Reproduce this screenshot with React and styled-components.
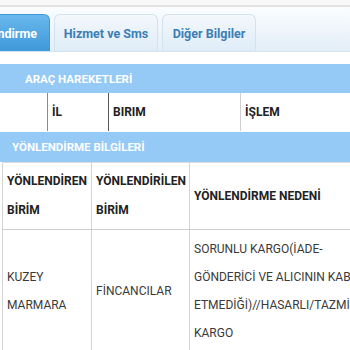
import React from 'react';
import styled, { createGlobalStyle } from 'styled-components';

const GlobalStyle = createGlobalStyle`
  html, body {
    margin: 0;
    padding: 0;
    background: #ffffff;
    overflow: hidden;
  }
  body {
    width: 350px;
    height: 350px;
    font-family: Roboto, "Noto Sans", "Liberation Sans", sans-serif;
  }
`;

const Page = styled.div`
  width: 350px;
  height: 350px;
  overflow: hidden;
  display: flex;
  flex-direction: column;
`;

const TopStrip = styled.div`
  height: 5px;
  background: #f7f7f7;
  border-bottom: 2px solid #e2e2e2;
  flex-shrink: 0;
`;

const TabBar = styled.div`
  height: 44px;
  flex-shrink: 0;
  display: flex;
  align-items: flex-end;
  background: linear-gradient(#fbfdff, #e3eef8);
  border-bottom: 1px solid #d3e2ef;
  overflow: hidden;
`;

const TabTrack = styled.div`
  display: flex;
  align-items: flex-end;
  gap: 4px;
  margin-left: ${({ offset }) => offset}px;
`;

const Tab = styled.div`
  height: 37px;
  padding: 0 12px;
  display: flex;
  align-items: center;
  white-space: nowrap;
  font-size: 12.5px;
  font-weight: 700;
  border-radius: 6px 6px 0 0;
  box-sizing: border-box;
  color: ${({ active }) => (active ? '#ffffff' : '#3b7eb5')};
  background: ${({ active }) =>
    active
      ? 'linear-gradient(#6ab8ee, #3f98d8)'
      : 'linear-gradient(#f3f8fc, #dfecf7)'};
  border: 1px solid ${({ active }) => (active ? '#3f98d8' : '#d2e2ef')};
  border-bottom: none;
  width: ${({ w }) => (w ? `${w}px` : 'auto')};
  justify-content: ${({ active }) => (active ? 'flex-start' : 'center')};
`;

const Section = styled.div`
  margin-top: ${({ top }) => top}px;
  width: 460px;
  flex-shrink: 0;
`;

const SectionHeader = styled.div`
  height: ${({ h }) => h}px;
  background: #95c9f6;
  color: #ffffff;
  font-size: 11.5px;
  font-weight: 700;
  display: flex;
  align-items: center;
  padding-left: ${({ pad }) => pad}px;
`;

const Row = styled.div`
  display: grid;
  grid-template-columns: ${({ cols }) => cols};
  margin-left: ${({ inset }) => inset || 0}px;
  border-top: ${({ topLine }) => (topLine ? '1px solid #dcdcdc' : 'none')};
  border-bottom: ${({ bottomLine }) => (bottomLine ? '1px solid #cfcfcf' : 'none')};
  min-height: ${({ h }) => h}px;
`;

const Cell = styled.div`
  border-left: 1px solid ${({ line }) => line || '#d4d4d4'};
  padding: 0 4px;
  display: flex;
  align-items: center;
  font-size: 12px;
  font-weight: ${({ bold }) => (bold ? 700 : 400)};
  color: ${({ bold }) => (bold ? '#222' : '#3a3a3a')};
  line-height: ${({ lh }) => lh || 28}px;
  box-sizing: border-box;
`;

const EmptyCell = styled.div``;

function App() {
  return (
    <Page>
      <GlobalStyle />
      <TopStrip />
      <TabBar>
        <TabTrack offset={-47}>
          <Tab active>Yönlendirme</Tab>
          <Tab w={104}>Hizmet ve Sms</Tab>
          <Tab w={94}>Diğer Bilgiler</Tab>
        </TabTrack>
      </TabBar>

      <Section top={12}>
        <SectionHeader h={29} pad={25}>ARAÇ HAREKETLERİ</SectionHeader>
        <Row cols="47px 61px 132px 1fr" h={38}>
          <EmptyCell />
          <Cell bold line="#8a8a8a">İL</Cell>
          <Cell bold line="#5a5a5a">BIRIM</Cell>
          <Cell bold line="#cfcfcf">İŞLEM</Cell>
        </Row>
      </Section>

      <Section top={1}>
        <SectionHeader h={30} pad={12}>YÖNLENDİRME BİLGİLERİ</SectionHeader>
        <Row cols="89px 98px 1fr" h={66} inset={2} topLine bottomLine>
          <Cell bold lh={29}>YÖNLENDİREN BİRİM</Cell>
          <Cell bold lh={29}>YÖNLENDİRİLEN BİRİM</Cell>
          <Cell bold>YÖNLENDİRME NEDENİ</Cell>
        </Row>
        <Row cols="89px 98px 172px" h={122} inset={2}>
          <Cell>KUZEY MARMARA</Cell>
          <Cell>FİNCANCILAR</Cell>
          <Cell>SORUNLU KARGO(İADE-GÖNDERİCİ VE ALICININ KABUL ETMEDİĞİ)//HASARLI/TAZMİNAT KARGO</Cell>
        </Row>
      </Section>
    </Page>
  );
}

export default App;
